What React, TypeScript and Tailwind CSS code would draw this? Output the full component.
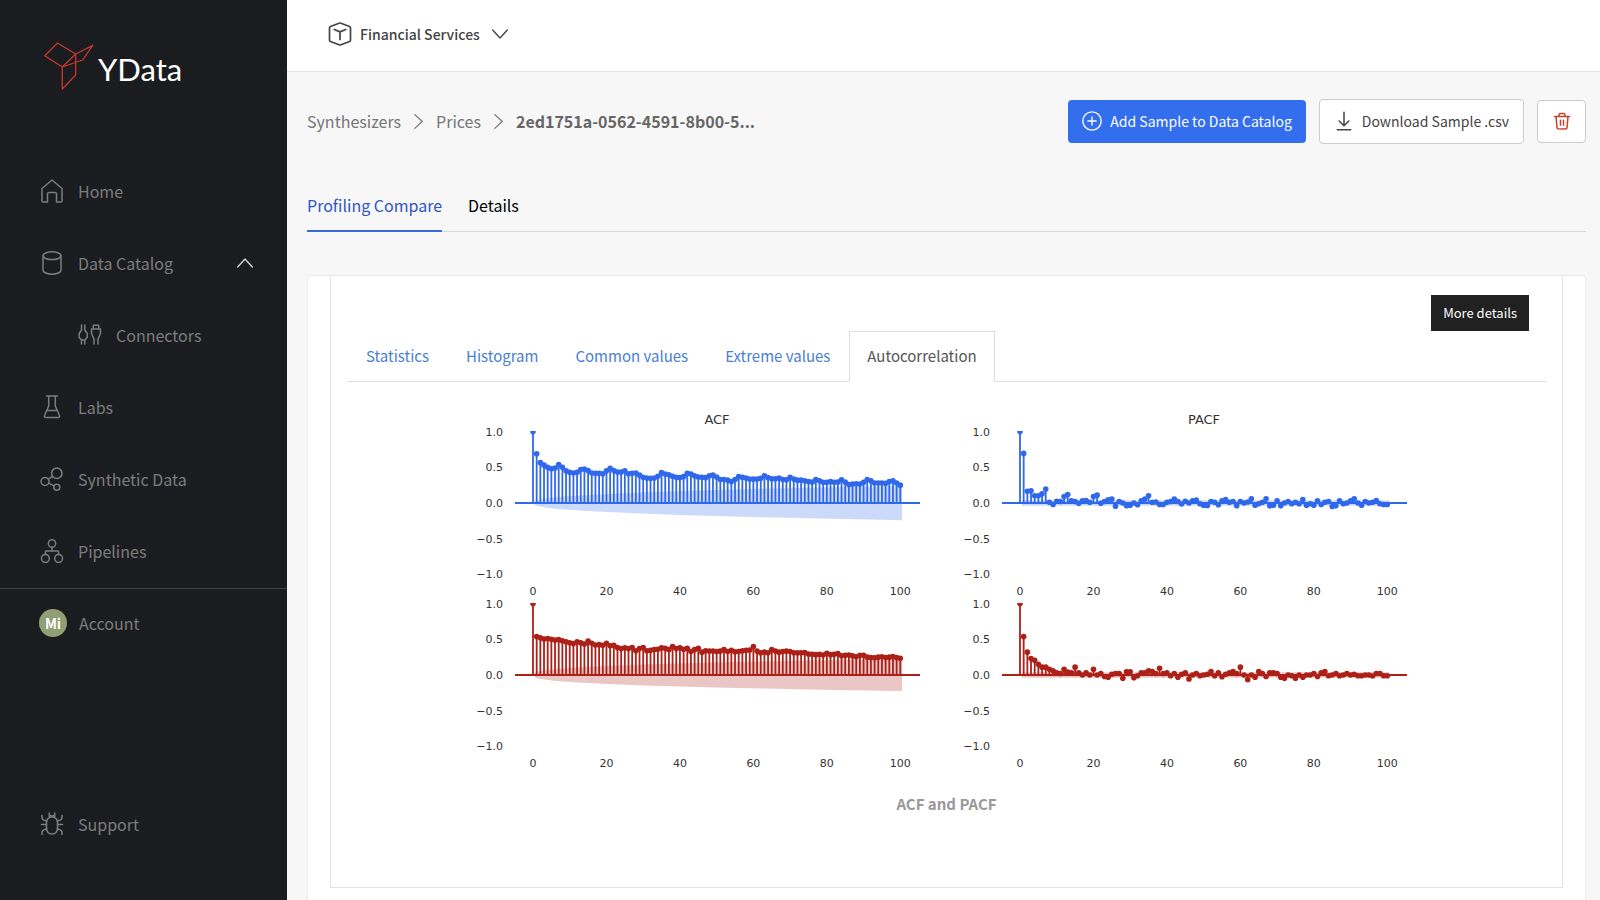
import type { ReactNode } from "react";
import clsx from "clsx";

type IconProps = { className?: string };

function Icon({ className, children, width = 1.5 }: IconProps & { children: ReactNode; width?: number }) {
  return (
    <svg
      viewBox="0 0 24 24"
      fill="none"
      stroke="currentColor"
      strokeWidth={width}
      strokeLinecap="round"
      strokeLinejoin="round"
      aria-hidden="true"
      className={clsx("shrink-0", className)}
    >
      {children}
    </svg>
  );
}

const HomeIcon = ({ className }: IconProps) => (
  <Icon className={className}>
    <path d="M2 9.5 12 1l10 8.5V22a1 1 0 0 1-1 1h-4.5v-8a1.5 1.5 0 0 0-1.5-1.5H9A1.5 1.5 0 0 0 7.500 15v8H3a1 1 0 0 1-1-1Z" />
  </Icon>
);

const DatabaseIcon = ({ className }: IconProps) => (
  <Icon className={className}>
    <ellipse cx="12" cy="4.700" rx="9" ry="3.900" />
    <path d="M3 4.700v14.600c0 2.150 4 3.900 9 3.900s9-1.750 9-3.900V4.700" />
  </Icon>
);

const ConnectorsIcon = ({ className }: IconProps) => (
  <Icon className={className}>
    <path d="M3.500 2v5L1.200 10.500v4l2.300 2.500V21M6.800 2v5l2.400 3.500v4L6.800 17V21M3.500 17h3.300" />
    <path d="M15.300 6V2.200h5.400V6M13.500 6h9v4.500l-2.500 5.500V21M13.500 6v4.500l2.500 5.500V21" />
  </Icon>
);

const FlaskIcon = ({ className }: IconProps) => (
  <Icon className={className}>
    <path d="M6.500 1h11M8.700 1v10L4.500 20.500a1.400 1.400 0 0 0 1.300 2h12.400a1.400 1.400 0 0 0 1.300-2L15.300 11V1M6.800 15.500h10.400" />
  </Icon>
);

const SyntheticIcon = ({ className }: IconProps) => (
  <Icon className={className}>
    <circle cx="16.800" cy="6.300" r="5.200" />
    <circle cx="5" cy="14.500" r="4" />
    <circle cx="16.800" cy="20.300" r="3" />
    <path d="m8.400 12.200 4.200-2.900M8.600 16.200l5.500 2.700" />
  </Icon>
);

const PipelinesIcon = ({ className }: IconProps) => (
  <Icon className={className}>
    <circle cx="12" cy="4.500" r="3.700" />
    <circle cx="5.400" cy="19.400" r="3.900" />
    <circle cx="18.600" cy="19.400" r="3.900" />
    <path d="M12 8.200V12M5.400 15.500V13a1 1 0 0 1 1-1h11.200a1 1 0 0 1 1 1v2.500" />
  </Icon>
);

const BugIcon = ({ className }: IconProps) => (
  <Icon className={className}>
    <rect x="6.500" y="5" width="11" height="17" rx="5.300" />
    <path d="M9.300 1v3.800M14.700 1v3.800M9.300 2.800C10 4.500 14 4.500 14.700 2.800M1.500 12.500h5M17.500 12.500h5M2 3.500v2c0 2 2 3 4.800 3.400M22 3.500v2c0 2-2 3-4.800 3.400M2 22.500v-1.500c0-2.500 2-3.800 4.800-4M22 22.500v-1.500c0-2.500-2-3.800-4.800-4" />
  </Icon>
);

const CubeIcon = ({ className }: IconProps) => (
  <Icon className={className} width={1.7}>
    <path d="M11 1.200a2.500 2.500 0 0 1 2 0l8.500 3.300a1.700 1.700 0 0 1 1 1.600v11.800a1.700 1.700 0 0 1-1 1.600L13 22.800a2.500 2.500 0 0 1-2 0l-8.500-3.300a1.700 1.700 0 0 1-1-1.600V6.100a1.700 1.700 0 0 1 1-1.600Z" />
    <path d="M6.300 7.500 12 9.900l5.700-2.400M12 9.900v7.600" />
  </Icon>
);

const ChevronIcon = ({ className }: IconProps) => (
  <Icon className={className} width={2}>
    <path d="m1 6 11 12L23 6" />
  </Icon>
);

const PlusCircleIcon = ({ className }: IconProps) => (
  <Icon className={className} width={1.6}>
    <circle cx="12" cy="12" r="11" />
    <path d="M12 7v10M7 12h10" />
  </Icon>
);

const DownloadIcon = ({ className }: IconProps) => (
  <Icon className={className} width={1.8}>
    <path d="M12 1.500v16M6.200 12l5.800 5.800L17.800 12M4 22.500h16" />
  </Icon>
);

const TrashIcon = ({ className }: IconProps) => (
  <Icon className={className} width={2}>
    <path d="M2 6h20M8 6V4a2 2 0 0 1 2-2h4a2 2 0 0 1 2 2v2M4 6l1.300 14.300A2 2 0 0 0 7.300 22.500h9.400a2 2 0 0 0 2-2.200L20 6M10 11v6.500M14 11v6.500" />
  </Icon>
);

const nav = [
  { label: "Home", icon: HomeIcon },
  { label: "Data Catalog", icon: DatabaseIcon, open: true },
  { label: "Connectors", icon: ConnectorsIcon, nested: true },
  { label: "Labs", icon: FlaskIcon },
  { label: "Synthetic Data", icon: SyntheticIcon },
  { label: "Pipelines", icon: PipelinesIcon },
];

function Sidebar() {
  return (
    <aside className="flex w-[287px] shrink-0 flex-col bg-[#1b1c1f] pb-10 text-[#7d7d7d]">
      <a href="#" className="flex h-[155px] items-start pt-[42px] pl-11 text-white">
        <svg width="50" height="48" viewBox="0 0 50 48" fill="none" stroke="#c8372b" strokeWidth="1.3" strokeLinejoin="round" aria-hidden="true">
          <path d="M.8 13.700 13.300 1l18.400 11-13.400 13ZM31.700 12l17-8.700-10 14.700-20.400 7ZM18.300 25v22l13.400-14V12" />
        </svg>
        <span className="mt-[7px] ml-1 font-[Lato] text-[31px] leading-10">YData</span>
      </a>

      <nav className="pb-px">
        {nav.map((item) => (
          <a
            key={item.label}
            href="#"
            className={clsx("flex h-[72px] items-center gap-3.5 pr-[34px]", item.nested ? "pl-[78px]" : "pl-10")}
          >
            <item.icon className="size-6" />
            <span>{item.label}</span>
            {item.open && <ChevronIcon className="ml-auto size-4 rotate-180 text-[#d4d4d4]" />}
          </a>
        ))}
      </nav>

      <a href="#" className="flex h-[69px] items-center gap-3 border-t border-[#3f4043] pl-[39px]">
        <span className="flex size-7 items-center justify-center rounded-full bg-[#929e73] text-sm font-bold text-white">Mi</span>
        <span>Account</span>
      </a>
      <a href="#" className="mt-auto flex h-[72px] items-center gap-3.5 pl-10">
        <BugIcon className="size-6" />
        <span>Support</span>
      </a>
    </aside>
  );
}

const BLUE = "#2f68ea";
const RED = "#ad2018";

const acfBlue = [
  1, 0.69, 0.565, 0.53, 0.5, 0.48, 0.49, 0.54, 0.5, 0.45, 0.43, 0.42, 0.43, 0.47, 0.475, 0.455, 0.42, 0.415, 0.415, 0.41,
  0.45, 0.485, 0.455, 0.435, 0.435, 0.45, 0.41, 0.415, 0.42, 0.39, 0.36, 0.35, 0.345, 0.35, 0.375, 0.425, 0.405, 0.395, 0.375, 0.36,
  0.355, 0.37, 0.415, 0.405, 0.38, 0.365, 0.36, 0.355, 0.38, 0.39, 0.365, 0.33, 0.33, 0.32, 0.3, 0.33, 0.37, 0.36, 0.35, 0.335,
  0.335, 0.335, 0.345, 0.38, 0.355, 0.34, 0.34, 0.35, 0.33, 0.325, 0.36, 0.335, 0.32, 0.32, 0.31, 0.3, 0.295, 0.33, 0.31, 0.29,
  0.29, 0.3, 0.29, 0.295, 0.325, 0.295, 0.26, 0.265, 0.27, 0.265, 0.29, 0.33, 0.31, 0.28, 0.28, 0.28, 0.275, 0.3, 0.31, 0.28, 0.25,
];

const pacfBlue = [
  1, 0.695, 0.165, 0.17, 0.1, 0.1, 0.13, 0.195, 0.01, -0.02, 0.025, 0.02, 0.09, 0.12, 0.03, 0.02, -0.005, 0.03, 0.035, 0.01,
  0.09, 0.11, -0.005, 0.02, 0.045, 0.055, -0.045, 0.02, 0, -0.04, -0.03, 0, -0.025, 0.03, 0.055, 0.1, 0.01, 0.015, -0.02, -0.02,
  0.01, 0.02, 0.055, 0.02, -0.015, 0.025, 0, 0.03, 0.04, -0.01, -0.03, -0.035, 0.02, 0.01, -0.025, 0.03, 0.05, 0.01, 0.02, -0.04,
  0.02, 0, 0.015, 0.06, -0.03, -0.01, 0.01, 0.06, -0.04, -0.03, 0.03, -0.04, 0, 0.02, -0.01, 0.01, -0.01, 0.05, -0.03, -0.01,
  -0.03, 0.03, -0.02, 0.01, 0.02, -0.05, -0.04, 0.03, -0.01, 0, 0.03, 0.06, 0, -0.03, 0.02, 0, 0.01, 0.035, -0.01, -0.02, -0.02,
];

const acfRed = [
  1, 0.54, 0.52, 0.505, 0.51, 0.5, 0.49, 0.495, 0.48, 0.465, 0.45, 0.44, 0.465, 0.45, 0.435, 0.475, 0.445, 0.42, 0.425, 0.415,
  0.445, 0.41, 0.415, 0.385, 0.37, 0.38, 0.37, 0.385, 0.34, 0.37, 0.385, 0.34, 0.345, 0.355, 0.36, 0.38, 0.375, 0.355, 0.4, 0.37,
  0.38, 0.36, 0.375, 0.33, 0.355, 0.375, 0.32, 0.34, 0.335, 0.335, 0.33, 0.335, 0.355, 0.33, 0.345, 0.325, 0.33, 0.34, 0.345, 0.35,
  0.4, 0.335, 0.31, 0.32, 0.31, 0.355, 0.335, 0.32, 0.33, 0.335, 0.33, 0.31, 0.31, 0.31, 0.315, 0.295, 0.29, 0.285, 0.29, 0.28,
  0.305, 0.285, 0.29, 0.3, 0.27, 0.275, 0.28, 0.27, 0.255, 0.275, 0.275, 0.25, 0.245, 0.24, 0.25, 0.255, 0.245, 0.25, 0.26, 0.245, 0.235,
];

const pacfRed = [
  1, 0.54, 0.32, 0.23, 0.205, 0.15, 0.11, 0.11, 0.08, 0.06, 0.03, 0.02, 0.08, 0.04, 0.03, 0.11, 0.03, 0, 0.03, 0,
  0.08, 0, 0.02, -0.02, -0.03, 0.01, 0.02, 0.02, -0.045, 0.045, 0.045, -0.04, -0.01, 0.03, 0.03, 0.06, 0.05, 0.02, 0.095, 0.02,
  0.03, -0.01, 0.02, -0.03, 0.01, 0.03, -0.055, 0, 0.02, -0.01, 0, 0.01, 0.05, -0.01, 0.03, -0.025, 0.01, 0.03, 0.05, 0.02,
  0.11, 0, -0.065, 0, -0.03, 0.05, 0.02, -0.02, 0.03, 0.03, 0.02, -0.03, -0.045, 0, -0.01, -0.045, 0, -0.03, 0, 0,
  0.02, -0.02, 0.03, 0.05, -0.01, 0, 0.02, -0.01, 0, 0.02, 0, 0.01, -0.01, -0.01, 0, 0, -0.015, 0.02, 0.02, -0.01, -0.01,
];

const STEP = 3.673; // px per lag
const UNIT = 71.4; // px per 1.0 of correlation

type PlotProps = {
  x: number;
  y: number;
  color: string;
  values: number[];
  // half height of the confidence band at a given lag
  band: (lag: number) => number;
  title?: string;
};

function Plot({ x, y, color, values, band, title }: PlotProps) {
  const lags = [0.5, 1, 2, 4, 7, 11, 16, 22, 30, 40, 52, 66, 82, 100.5];
  const upper = lags.map((l) => `${l * STEP},${-band(l) * UNIT}`);
  const lower = lags.map((l) => `${l * STEP},${band(l) * UNIT}`).reverse();

  return (
    <g transform={`translate(${x} ${y})`}>
      {title && (
        <text x={184} y={-79} textAnchor="middle" fontSize={13}>
          {title}
        </text>
      )}
      {[1, 0.5, 0, -0.5, -1].map((t) => (
        <text key={t} x={-30} y={4 - t * UNIT} textAnchor="end" fontSize={11}>
          {t.toFixed(1).replace("-", "−")}
        </text>
      ))}
      {[0, 20, 40, 60, 80, 100].map((t) => (
        <text key={t} x={t * STEP} y={92} textAnchor="middle" fontSize={11}>
          {t}
        </text>
      ))}
      <g clipPath="url(#plot-area)">
        {values.map((v, i) => (
          <line key={i} x1={i * STEP} x2={i * STEP} y1={0} y2={-v * UNIT} stroke={color} strokeWidth={1.8} />
        ))}
        <polygon points={[...upper, ...lower].join(" ")} fill={color} fillOpacity={0.25} />
        <line x1={-18} x2={387} y1={0} y2={0} stroke={color} strokeWidth={1.8} />
        {values.map((v, i) => (
          <circle key={i} cx={i * STEP} cy={-v * UNIT} r={2.8} fill={color} />
        ))}
      </g>
    </g>
  );
}

function Correlograms() {
  return (
    <svg
      viewBox="0 0 940 366"
      role="img"
      aria-label="ACF and PACF"
      className="mx-auto w-[940px] max-w-full fill-[#333] font-['DejaVu_Sans',sans-serif]"
    >
      <defs>
        <clipPath id="plot-area">
          <rect x={-18} y={-UNIT - 0.5} width={405} height={UNIT * 2 + 1} />
        </clipPath>
      </defs>
      <Plot title="ACF" x={56} y={93} color={BLUE} values={acfBlue} band={(l) => 0.24 * (l / 100) ** 0.4} />
      <Plot title="PACF" x={543} y={93} color={BLUE} values={pacfBlue} band={() => 0.04} />
      <Plot x={56} y={265} color={RED} values={acfRed} band={(l) => 0.225 * (l / 100) ** 0.36} />
      <Plot x={543} y={265} color={RED} values={pacfRed} band={() => 0.04} />
    </svg>
  );
}

const reportTabs = ["Statistics", "Histogram", "Common values", "Extreme values", "Autocorrelation"];

export default function App() {
  return (
    <div className="flex min-h-screen bg-[#f7f7f8] font-['Noto_Sans_CJK_SC',sans-serif] text-base">
      <Sidebar />

      <div className="flex min-w-0 flex-1 flex-col">
        <header className="flex h-[72px] items-center border-b border-[#e6e6e6] bg-white px-[41px] pb-1">
          <button className="flex items-center gap-2 text-sm font-medium text-[#444]">
            <CubeIcon className="size-6" />
            Financial Services
            <ChevronIcon className="ml-1 size-4" />
          </button>
        </header>

        <main className="flex flex-1 flex-col pr-3.5 pl-5">
          <div className="flex h-[98px] items-center justify-between">
            <nav aria-label="Breadcrumb" className="flex items-center gap-2.5 text-[#757575]">
              <a href="#">Synthesizers</a>
              <ChevronIcon className="size-[15px] -rotate-90" />
              <a href="#">Prices</a>
              <ChevronIcon className="size-[15px] -rotate-90" />
              <span className="font-bold text-[#666]">2ed1751a-0562-4591-8b00-5...</span>
            </nav>
            <div className="flex items-center gap-[13px] text-sm">
              <button className="flex h-[43px] items-center gap-2 rounded bg-[#326eee] px-3.5 text-white">
                <PlusCircleIcon className="size-5" />
                Add Sample to Data Catalog
              </button>
              <button className="flex h-[45px] items-center gap-2 rounded border border-[#ccc] bg-white px-3.5 text-[#444]">
                <DownloadIcon className="size-5" />
                Download Sample .csv
              </button>
              <button aria-label="Delete" className="flex h-[43px] w-[49px] items-center justify-center rounded border border-[#ccc] bg-white text-[#c9402f]">
                <TrashIcon className="size-[18px]" />
              </button>
            </div>
          </div>

          <div role="tablist" className="mt-2.5 flex h-[52px] gap-[26px] border-b border-[#d9d9d9]">
            <button role="tab" aria-selected="true" className="-mb-px border-b-2 border-[#3a6ad4] text-[#2f55c0]">
              Profiling Compare
            </button>
            <button role="tab" aria-selected="false" className="-mb-px border-b-2 border-transparent text-black">
              Details
            </button>
          </div>

          <section className="mt-[43px] flex-1 rounded-t border border-b-0 border-[#ebebeb] bg-white px-[22px] pb-3">
            <div className="flex flex-col border border-t-0 border-[#e3e3e3] px-4 pb-[71px]">
              <button className="mt-[19px] mr-[17px] h-9 self-end bg-[#212121] px-3 text-[13px] text-white">More details</button>
              <div role="tablist" className="flex gap-px border-b border-[#ddd] pl-px">
                {reportTabs.map((tab) => (
                  <button
                    key={tab}
                    role="tab"
                    aria-selected={tab === "Autocorrelation"}
                    className={clsx(
                      "-mb-px h-[51px] border px-[17px] text-[15px]",
                      tab === "Autocorrelation"
                        ? "border-[#ddd] border-b-white bg-white text-[#555]"
                        : "border-transparent text-[#4a80d4]",
                    )}
                  >
                    {tab}
                  </button>
                ))}
              </div>
              <figure className="pt-7">
                <Correlograms />
                <figcaption className="mt-[17px] text-center text-[15px] font-bold text-[#999]">ACF and PACF</figcaption>
              </figure>
            </div>
          </section>
        </main>
      </div>
    </div>
  );
}
